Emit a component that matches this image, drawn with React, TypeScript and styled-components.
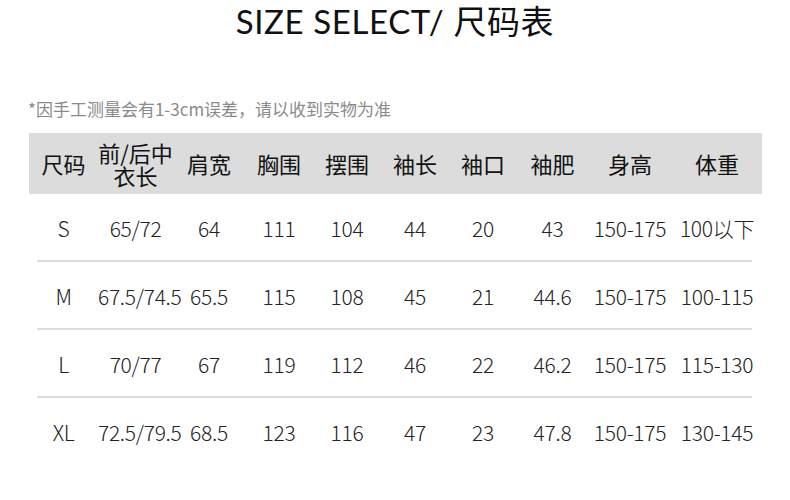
import React from "react";
import styled, { createGlobalStyle } from "styled-components";

const headers = ["尺码", "前/后中\n衣长", "肩宽", "胸围", "摆围", "袖长", "袖口", "袖肥", "身高", "体重"];

const rows = [
  ["S", "65/72", "64", "111", "104", "44", "20", "43", "150-175", "100以下"],
  ["M", "67.5/74.5", "65.5", "115", "108", "45", "21", "44.6", "150-175", "100-115"],
  ["L", "70/77", "67", "119", "112", "46", "22", "46.2", "150-175", "115-130"],
  ["XL", "72.5/79.5", "68.5", "123", "116", "47", "23", "47.8", "150-175", "130-145"],
];

function App() {
  return (
    <Page>
      <GlobalStyle />
      <Title>
        SIZE SELECT/ <Cjk>尺码表</Cjk>
      </Title>
      <Note>*因手工测量会有1-3cm误差，请以收到实物为准</Note>
      <Table>
        <HeadRow>
          {headers.map((h) => (
            <HeadCell key={h}>{h}</HeadCell>
          ))}
        </HeadRow>
        {rows.map((r, i) => (
          <DataRow key={r[0]} $last={i === rows.length - 1}>
            {r.map((v, j) => (
              <DataCell key={j}>{v}</DataCell>
            ))}
          </DataRow>
        ))}
      </Table>
    </Page>
  );
}

const GlobalStyle = createGlobalStyle`
  body {
    margin: 0;
    background: #fff;
  }
`;

const Page = styled.div`
  width: 790px;
  height: 500px;
  overflow: hidden;
  display: flex;
  flex-direction: column;
  font-family: "Noto Sans CJK SC", sans-serif;
  color: #111;
`;

const Title = styled.h1`
  margin: 0;
  padding-top: 1px;
  text-align: center;
  font-family: "Lato", "Noto Sans CJK SC", sans-serif;
  font-weight: 400;
  font-size: 33px;
  line-height: 38px;
  letter-spacing: 0.6px;
  color: #111;
`;

const Cjk = styled.span`
  font-family: "Noto Sans CJK SC", sans-serif;
`;

const Note = styled.p`
  margin: 57px 0 0 28px;
  font-size: 17px;
  line-height: 24px;
  color: #8a8a8a;
`;

const Table = styled.div`
  margin: 12px 0 0 29px;
  width: 733px;
`;

const cols = "69px 75px 72px 68px 68px 68px 68px 71px 84px 90px";

const HeadRow = styled.div`
  display: grid;
  grid-template-columns: ${cols};
  height: 61px;
  align-items: center;
  background: #dcdcdc;
`;

const HeadCell = styled.div`
  text-align: center;
  white-space: pre-line;
  font-size: 22px;
  line-height: 23px;
  color: #111;
`;

const DataRow = styled.div<{ $last?: boolean }>`
  display: grid;
  grid-template-columns: ${cols};
  height: 68px;
  align-items: center;
  background: ${(p) =>
    p.$last
      ? "none"
      : "linear-gradient(#dcdcdc, #dcdcdc) no-repeat 8px 100% / calc(100% - 18px) 2px"};
`;

const DataCell = styled.div`
  text-align: center;
  font-size: 21px;
  font-weight: 300;
  color: #222;
  white-space: nowrap;
  letter-spacing: -0.3px;
`;

export default App;
